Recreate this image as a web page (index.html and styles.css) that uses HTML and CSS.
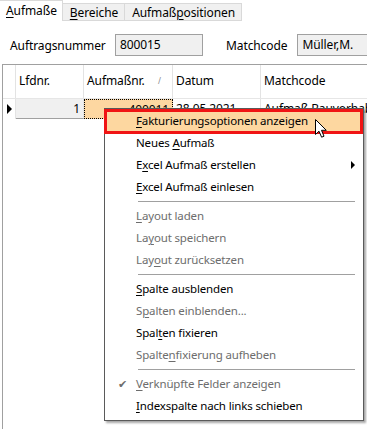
FILE: index.html
```
<!DOCTYPE html>
<html lang="de">
<head>
    <meta charset="UTF-8">
    <meta name="viewport" content="width=device-width, initial-scale=1.0">
    <title>Aufmaße</title>
    <link rel="stylesheet" href="styles.css">
</head>
<body>
    <div class="tabs">
        <div class="tab active"><u>A</u>ufmaße</div>
        <div class="tab"><u>B</u>ereiche</div>
        <div class="tab">Aufmaß<u>p</u>ositionen</div>
        <div class="tab-fill"></div>
    </div>

    <div class="form-row">
        <span class="label">Auftragsnummer</span>
        <div class="field field-nr">800015</div>
        <span class="label label-mc">Matchcode</span>
        <div class="field field-mc">Müller,M.</div>
    </div>

    <div class="grid">
        <div class="grid-head">
            <div class="cell ind"></div>
            <div class="cell">Lfdnr.</div>
            <div class="cell">Aufmaßnr.<span class="sort">/</span></div>
            <div class="cell">Datum</div>
            <div class="cell last">Matchcode</div>
        </div>
        <div class="grid-row">
            <div class="cell ind"><span class="row-arrow"></span></div>
            <div class="cell num lfd">1</div>
            <div class="cell num focus">400011</div>
            <div class="cell">28.05.2021</div>
            <div class="cell last">Aufmaß Bauvorhaben</div>
        </div>
    </div>

    <div class="menu">
        <div class="item hot"><u>F</u>akturierungsoptionen anzeigen</div>
        <div class="item">Neues <u>A</u>ufmaß</div>
        <div class="item">E<u>x</u>cel Aufmaß erstellen<span class="sub-arrow"></span></div>
        <div class="item"><u>E</u>xcel Aufmaß einlesen</div>
        <div class="sep"></div>
        <div class="item off"><u>L</u>ayout laden</div>
        <div class="item off">La<u>y</u>out speichern</div>
        <div class="item off">Lay<u>o</u>ut zurücksetzen</div>
        <div class="sep"></div>
        <div class="item"><u>S</u>palte ausblenden</div>
        <div class="item off">S<u>p</u>alten einblenden...</div>
        <div class="item">Spal<u>t</u>en fixieren</div>
        <div class="item off">Spalte<u>n</u>fixierung aufheben</div>
        <div class="sep"></div>
        <div class="item off"><span class="check">✔</span><u>V</u>erknüpfte Felder anzeigen</div>
        <div class="item"><u>I</u>ndexspalte nach links schieben</div>
        <div class="mark"></div>
    </div>

    <svg class="cursor" width="13" height="20" viewBox="0 0 13 20">
        <path d="M0.5 0.5 L0.5 15.5 L4 12.2 L6.6 18.2 L9 17.2 L6.5 11.3 L11.3 11.3 Z" fill="#fff" stroke="#000" stroke-width="1" stroke-linejoin="miter"/>
    </svg>
</body>
</html>
```

FILE: styles.css
```
body {
    margin: 0;
    width: 367px;
    height: 429px;
    overflow: hidden;
    background: #fff;
    font-family: "Noto Sans", "Open Sans", sans-serif;
    font-size: 12px;
    letter-spacing: -0.1px;
    color: #000;
    position: relative;
}
u {
    text-decoration-thickness: 1px;
    text-underline-offset: 2px;
}

/* tabs */
.tabs {
    display: flex;
    height: 21px;
    align-items: flex-end;
}
.tab {
    height: 18px;
    line-height: 17px;
    padding: 0 6px 0 7px;
    background: #f0f0f0;
    border: 1px solid #d9d9d9;
    border-left: none;
    box-sizing: border-box;
}
.tab.active {
    height: 21px;
    line-height: 20px;
    background: #fff;
    border-bottom: none;
    padding: 0 5px 0 6px;
}
.tab-fill {
    flex: 1;
}

/* header fields */
.form-row {
    display: flex;
    align-items: center;
    margin-top: 13px;
    height: 22px;
    padding-left: 10px;
}
.label {
    width: 105px;
}
.label-mc {
    width: auto;
    margin-left: 23px;
    margin-right: 10px;
}
.field {
    height: 22px;
    line-height: 20px;
    box-sizing: border-box;
    border: 1px solid #a0a0a0;
    background: #f0f0f0;
    padding-left: 4px;
}
.field-nr {
    width: 88px;
}
.field-mc {
    flex: 1;
    border-right: none;
}

/* grid */
.grid {
    margin: 8px 0 0 2px;
    height: 365px;
    border-top: 1px solid #a0a0a0;
    border-left: 1px solid #a0a0a0;
}
.grid-head,
.grid-row {
    display: grid;
    grid-template-columns: 13px 68px 89px 88px 1fr;
}
.grid-head {
    height: 33px;
    border-bottom: 1px solid #e6e6e6;
}
.grid-head .cell {
    line-height: 32px;
    padding-left: 3px;
    border-right: 1px solid #e3e3e3;
    position: relative;
}
.sort {
    position: absolute;
    right: 11px;
    top: 0;
    font-size: 8px;
    color: #888;
}
.grid-row {
    height: 20px;
}
.cell {
    white-space: nowrap;
    overflow: hidden;
}
.grid-head .cell.last,
.grid-row .cell.last {
    border-right: none;
}
.grid-row .cell {
    line-height: 19px;
    padding-left: 3px;
    border-right: 1px solid #e3e3e3;
}
.grid-row .ind {
    position: relative;
}
.row-arrow {
    position: absolute;
    left: 4px;
    top: 5px;
    border-left: 5px solid #000;
    border-top: 5px solid transparent;
    border-bottom: 5px solid transparent;
}
.num {
    text-align: right;
    padding-right: 3px;
}
.lfd {
    background: #f0f0f0;
    border-bottom: 1px solid #a0a0a0;
}
.focus {
    background: #fdd7a1;
    border: 1px dotted #000 !important;
}

/* context menu */
.menu {
    position: absolute;
    left: 104px;
    top: 108px;
    width: 260px;
    height: 313px;
    box-sizing: border-box;
    background: #fff;
    border: 1px solid #5a5a5a;
    padding-top: 1px;
    box-shadow: 2px 2px 2px rgba(0, 0, 0, 0.35);
    font-size: 11.5px;
    letter-spacing: -0.15px;
}
.item {
    position: relative;
    height: 22px;
    line-height: 22px;
    padding-left: 31px;
    white-space: nowrap;
}
.item.off {
    color: #6d6d6d;
}
.item.hot {
    background: #fdd7a0;
}
.check {
    position: absolute;
    left: 13px;
    top: 0;
    font-size: 11px;
    color: #6d6d6d;
}
.sub-arrow {
    position: absolute;
    right: 8px;
    top: 7px;
    border-left: 4px solid #000;
    border-top: 4px solid transparent;
    border-bottom: 4px solid transparent;
}
.sep {
    height: 7px;
    margin: 0 8px 0 33px;
    position: relative;
}
.sep::after {
    content: "";
    position: absolute;
    left: 0;
    right: 0;
    top: 3px;
    border-top: 1px solid #a0a0a0;
}
.mark {
    position: absolute;
    left: -1px;
    top: 0;
    width: 259px;
    height: 25px;
    box-sizing: border-box;
    border: 3px solid #f01414;
}

.cursor {
    position: absolute;
    left: 315px;
    top: 119px;
}
```
